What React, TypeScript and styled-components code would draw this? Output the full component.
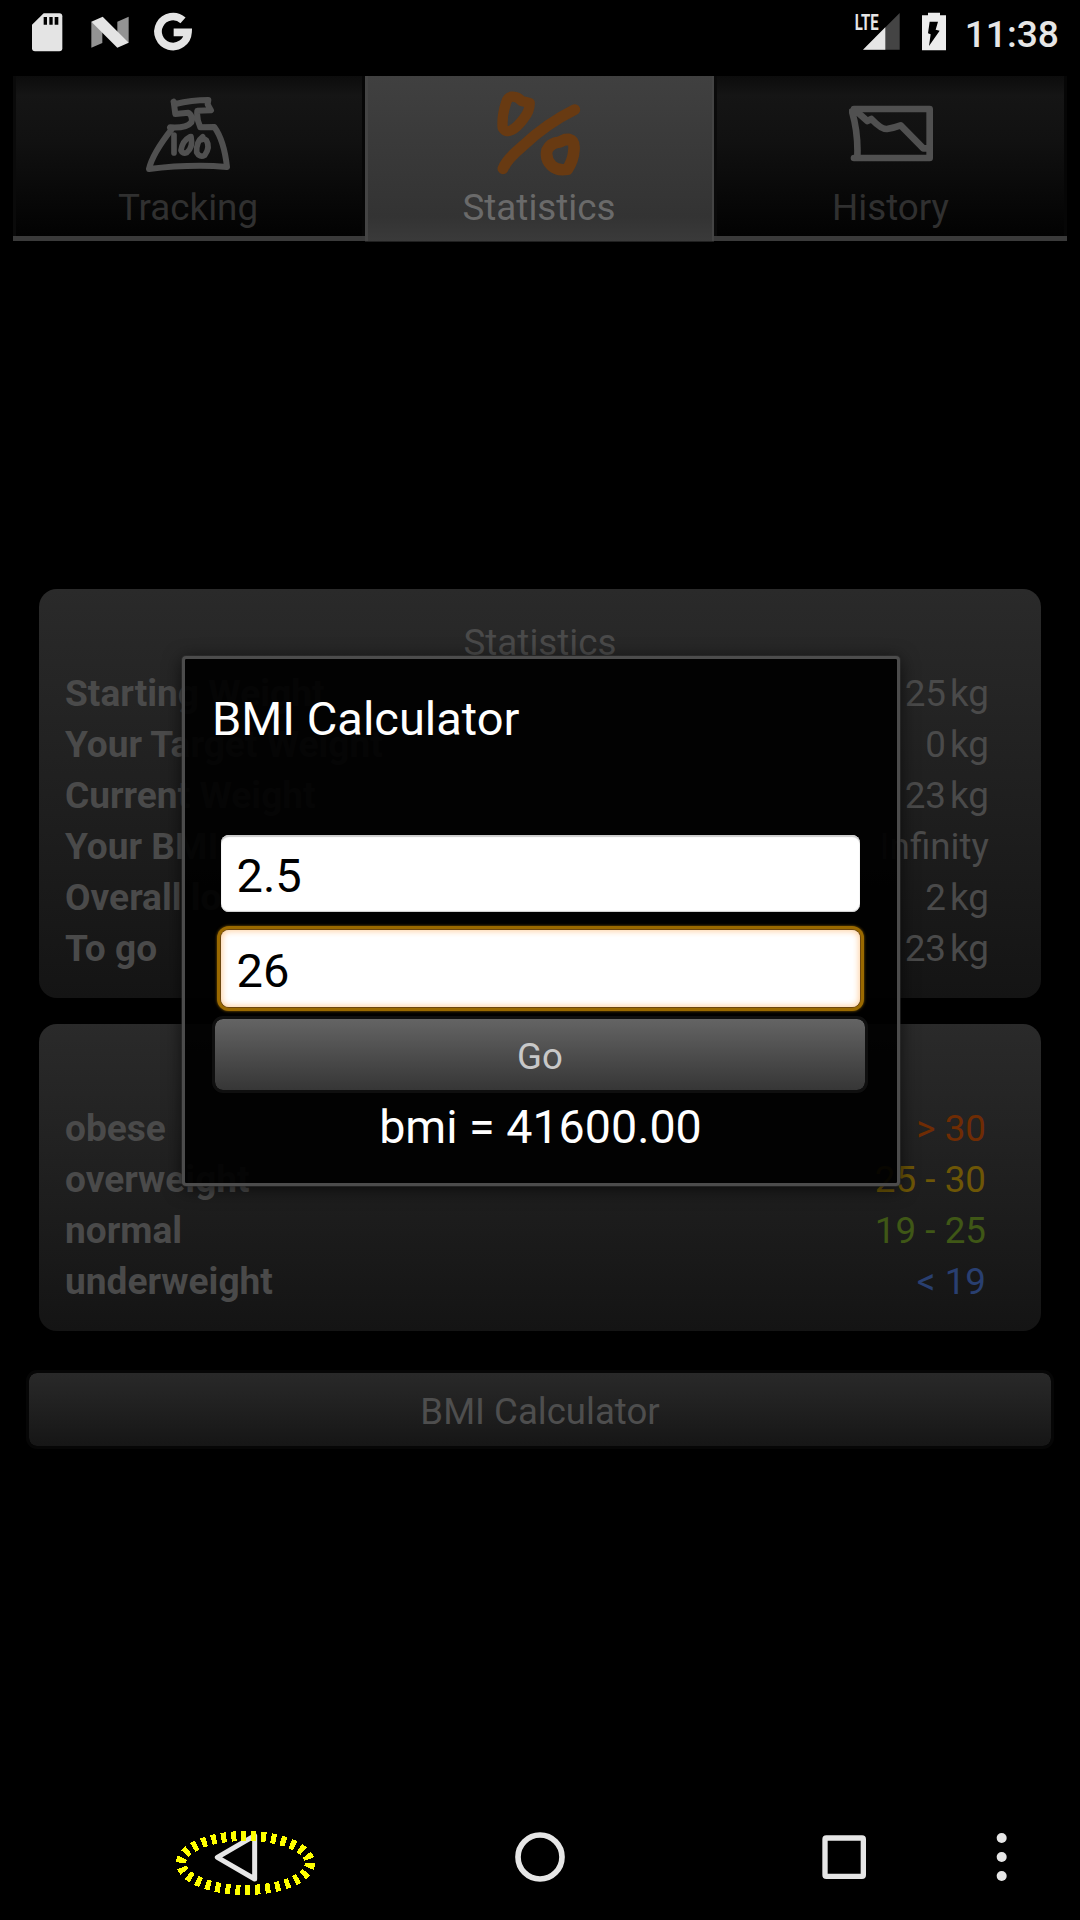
import React from "react";
import styled, { createGlobalStyle } from "styled-components";

const GlobalStyle = createGlobalStyle`
  * { box-sizing: border-box; }
  body { margin: 0; background: #000; }
`;

const Screen = styled.div`
  position: relative;
  width: 1080px;
  height: 1920px;
  display: flex;
  flex-direction: column;
  overflow: hidden;
  background: #000;
  color: #4a4a4a;
  font: 400 36.8px/51px Roboto, sans-serif;
`;

const StatusBar = styled.header`
  height: 76px;
  padding: 12.7px 21px 0 32.4px;
  display: flex;
  align-items: flex-start;
  justify-content: space-between;
`;

const StatusGroup = styled.div<{ $gap: number }>`
  display: flex;
  gap: ${(p) => p.$gap}px;

  svg {
    overflow: visible;
  }
`;

const Clock = styled.span`
  margin-top: 1px;
  margin-left: -2px;
  color: #e6e6e6;
  font-size: 37.2px;
  font-weight: 500;
  line-height: 40px;
`;

const Tabs = styled.nav`
  height: 166px;
  margin: 0 13px;
  display: flex;
`;

const Tab = styled.div<{ $active?: boolean; $width: number; $inset?: number }>`
  width: ${(p) => p.$width}px;
  height: ${(p) => (p.$active ? 166 : 165)}px;
  display: flex;
  flex-direction: column;
  align-items: center;
  padding-right: ${(p) => p.$inset ?? 0}px;
  color: ${(p) => (p.$active ? "#6a6a6a" : "#303030")};
  background: ${(p) =>
    p.$active
      ? "linear-gradient(#404040, #333 85%, #3a3a3a)"
      : "linear-gradient(#0c0c0c, #151515 12%, #111 40%, #020202)"};
  border-bottom: ${(p) => (p.$active ? "1px solid #202020" : "5px solid #3a3a3a")};
  box-shadow: ${(p) => (p.$active ? "inset 3px 0 #444, inset -2px 0 #444" : "inset 3px 0 #0a0a0a, inset -3px 0 #060606")};
`;

const TabIcon = styled.div`
  height: 106px;
  display: flex;
`;

const TabLabel = styled.span`
  line-height: 51px;
`;

const Content = styled.main`
  flex: 1;
  padding: 347px 26px 0;
  display: flex;
  flex-direction: column;
`;

const Card = styled.section<{ $height: number }>`
  height: ${(p) => p.$height}px;
  margin: 0 13px 26px;
  padding: 28px 52px 0 26px;
  border-radius: 18px;
  background: linear-gradient(#2a2a2a, #141414);
`;

const CardTitle = styled.div`
  height: 51px;
  margin-right: -26px;
  text-align: center;
`;

const Row = styled.div`
  height: 51px;
  display: flex;
  justify-content: space-between;
`;

const RowLabel = styled.span`
  font-size: 37.1px;
  font-weight: 700;
`;

const Value = styled.span<{ $color?: string }>`
  display: flex;
  gap: 4px;
  padding-right: ${(p) => (p.$color ? 3 : 0)}px;
  color: ${(p) => p.$color ?? "inherit"};
`;

const Button = styled.button<{ $bright?: boolean }>`
  display: block;
  width: 100%;
  height: ${(p) => (p.$bright ? 77 : 79)}px;
  margin: ${(p) => (p.$bright ? "0" : "13px 0 0")};
  padding: 5px 0 0;
  border: 3px solid ${(p) => (p.$bright ? "#0f0f0f" : "#060606")};
  border-radius: 11px;
  background: ${(p) => (p.$bright ? "linear-gradient(#646464, #363636)" : "linear-gradient(#292929, #161616)")};
  background-clip: padding-box;
  color: ${(p) => (p.$bright ? "#c8c8c8" : "#4e4e4e")};
  font: 400 36.6px/44px Roboto, sans-serif;
`;

const GoRow = styled.div`
  width: 656px;
`;

const NavBar = styled.footer`
  position: relative;
  height: 144px;
  padding-left: 213px;
  display: flex;
  align-items: flex-start;
`;

const NavItem = styled.div<{ $before: number }>`
  margin-left: ${(p) => p.$before}px;
  display: flex;
`;

const TouchMark = styled.svg`
  position: absolute;
  left: 170px;
  top: 47px;
`;

const Dialog = styled.section`
  position: absolute;
  left: 182px;
  top: 656px;
  width: 718px;
  height: 530px;
  display: flex;
  flex-direction: column;
  padding: 30px 27px 0;
  border: 3px solid #4c4c4c;
  border-radius: 4px;
  background: rgba(0, 0, 0, 0.93);
  background-clip: padding-box;
  box-shadow: 0 0 0 1px rgba(50, 50, 50, 0.5), 0 3px 18px rgba(0, 0, 0, 0.65);
  color: #fff;
`;

const DialogTitle = styled.h1`
  height: 146px;
  margin: 0;
  font: 400 47px/60px Roboto, sans-serif;
`;

const Field = styled.input<{ $focused?: boolean }>`
  width: 639px;
  height: 77px;
  margin: 0 0 ${(p) => (p.$focused ? 9 : 18)}px 8.5px;
  padding: 3px 16px 0;
  border: 0;
  outline: 0;
  border-radius: 8px;
  background: #fff;
  color: #000;
  font: 400 47px/74px Roboto, sans-serif;
  box-shadow: ${(p) =>
    p.$focused
      ? "0 0 0 1px #6c4710, 0 0 0 4px #9a6900, 0 0 3px 4px #8a5e00, inset 0 0 6px 1px #ffcf9c"
      : "inset 0 2px 1px #ccc, inset 0 -1px 1px #ccc"};
`;

const Result = styled.output`
  margin-top: 6px;
  padding-right: 1px;
  text-align: center;
  font: 400 46.6px/56px Roboto, sans-serif;
`;

const SdSvg = styled.svg`
  margin-right: 3px;
`;

const TabSvg = styled.svg<{ $top: number }>`
  margin-top: ${(p) => p.$top}px;
  fill: none;
  stroke-linecap: round;
  stroke-linejoin: round;
`;

const SdIcon = () => (
  <SdSvg width="31" height="39" viewBox="97 37 93 117">
    <path d="M132 38H179Q188 38 188 47V143Q188 152 179 152H106Q97 152 97 143V72Z" fill="#e4e4e4" />
    <path d="M132 49h10v23h-10zM149 49h10v23h-10zM165 49h11v23h-11z" fill="#000" />
  </SdSvg>
);

const NougatIcon = () => (
  <svg width="38" height="39" viewBox="275 37 114 117">
    <path d="M276 63V141L309 127V80ZM354 63L388 48V126L354 110Z" fill="#939393" />
    <path d="M276 63L310 48L388 126L354 141Z" fill="#e4e4e4" />
  </svg>
);

const GoogleIcon = () => (
  <svg width="38" height="39" viewBox="462 37 114 117">
    <path d="M549 59A45 45 0 1 0 564 95H521" fill="none" stroke="#e4e4e4" strokeWidth="23" />
  </svg>
);

const SignalIcon = () => (
  <svg width="46" height="39" viewBox="464 38 138 117">
    <path d="M491 148L601 38V148Z" fill="#444" />
    <path d="M491 148L558 81V148Z" fill="#e6e6e6" />
    <text x="466" y="88" fill="#e6e6e6" fontFamily="Roboto, sans-serif" fontWeight="700" fontSize="67" textLength="72" lengthAdjust="spacingAndGlyphs">
      LTE
    </text>
  </svg>
);

const BatteryIcon = () => (
  <svg width="25" height="39" viewBox="663 38 75 117">
    <path d="M666 45H684V37H720V45H738V150H666Z" fill="#ececec" />
    <path d="M689 64H714L707 88L719 91L687 137L692 102L684 99Z" fill="#000" />
  </svg>
);

const ScaleIcon = () => (
  <TabSvg $top={17} width="84" height="82" viewBox="438 278 252 246" stroke="#505050">
    <path
      strokeWidth="18"
      d="M521 304L526 311Q575 299 625 299L623 312L633 330L592 331Q589 356 601 381L643 380Q672 420 681 500Q640 496 600 496Q520 496 447 506Q457 460 517 384L510 381Q560 384 574 366Q580 348 565 337L526 341L521 304"
    />
    <path strokeWidth="17" d="M522 404V458M570 409Q547 421 543 450Q548 462 560 457Q580 442 573 409M608 409Q588 424 590 456Q599 473 614 465Q632 441 619 420Q613 414 605 418" />
  </TabSvg>
);

const PercentIcon = () => (
  <TabSvg $top={15} width="84" height="85" viewBox="440 95 252 255" stroke="#683a12">
    <path strokeWidth="31" d="M484 112Q501 110 514 125L538 131Q539 154 520 178Q500 205 484 212Q466 221 457 205Q454 170 467 131Q471 114 484 112" />
    <path strokeWidth="33" d="M458 328Q469 300 518 259Q590 192 673 151" />
    <path strokeWidth="35" d="M643 241L656 240Q673 244 671 270Q669 304 651 330Q620 335 604 319Q584 299 590 273Q599 251 628 248Z" />
  </TabSvg>
);

const ChartIcon = () => (
  <TabSvg $top={29} width="84" height="58" viewBox="447 316 252 174" stroke="#505050" strokeWidth="20">
    <path d="M462 328H689V475H462" />
    <path d="M456 335Q475 400 472 472M465 331L502 364L514 358Q545 390 561 388Q580 385 602 377L670 446H685" />
  </TabSvg>
);

const stats = [
  ["Starting Weight", "25", "kg"],
  ["Your Target Weight", "0", "kg"],
  ["Current Weight", "23", "kg"],
  ["Your BMI", "Infinity", ""],
  ["Overall loss", "2", "kg"],
  ["To go", "23", "kg"],
];

const ranges = [
  ["obese", "> 30", "#6f2c04"],
  ["overweight", "25 - 30", "#6d5606"],
  ["normal", "19 - 25", "#3f5716"],
  ["underweight", "< 19", "#293f70"],
];

export default function App() {
  return (
    <Screen>
      <GlobalStyle />
      <StatusBar>
        <StatusGroup $gap={25}>
          <SdIcon />
          <NougatIcon />
          <GoogleIcon />
        </StatusGroup>
        <StatusGroup $gap={21}>
          <SignalIcon />
          <BatteryIcon />
          <Clock>11:38</Clock>
        </StatusGroup>
      </StatusBar>

      <Tabs>
        <Tab $width={352} $inset={2}>
          <TabIcon><ScaleIcon /></TabIcon>
          <TabLabel>Tracking</TabLabel>
        </Tab>
        <Tab $active $width={349} $inset={1}>
          <TabIcon><PercentIcon /></TabIcon>
          <TabLabel>Statistics</TabLabel>
        </Tab>
        <Tab $width={353}>
          <TabIcon><ChartIcon /></TabIcon>
          <TabLabel>History</TabLabel>
        </Tab>
      </Tabs>

      <Content>
        <Card $height={409}>
          <CardTitle>Statistics</CardTitle>
          {stats.map(([label, value, unit]) => (
            <Row key={label}>
              <RowLabel>{label}</RowLabel>
              <Value>
                <span>{value}</span>
                {unit && <span>{unit}</span>}
              </Value>
            </Row>
          ))}
        </Card>
        <Card $height={307}>
          <CardTitle />
          {ranges.map(([label, value, color]) => (
            <Row key={label}>
              <RowLabel>{label}</RowLabel>
              <Value $color={color}>{value}</Value>
            </Row>
          ))}
        </Card>
        <Button>BMI Calculator</Button>
      </Content>

      <NavBar>
        <NavItem $before={0}>
          <svg width="46" height="130" viewBox="159 -72 138 390">
            <path d="M172 172L284 107V237Z" fill="none" stroke="#e6e6e6" strokeWidth="15" strokeLinejoin="round" />
          </svg>
        </NavItem>
        <NavItem $before={256}>
          <svg width="50" height="130" viewBox="1065 -72 150 390">
            <circle cx="1140" cy="171" r="66" fill="none" stroke="#e6e6e6" strokeWidth="17" />
          </svg>
        </NavItem>
        <NavItem $before={257}>
          <svg width="44" height="130" viewBox="126 -72 132 390">
            <rect x="135" y="114" width="115" height="115" rx="4" fill="none" stroke="#e6e6e6" strokeWidth="16" />
          </svg>
        </NavItem>
        <NavItem $before={130}>
          <svg width="12" height="130" viewBox="648 -72 36 390">
            <g fill="#e6e6e6">
              <circle cx="665" cy="114" r="15" />
              <circle cx="665" cy="171" r="15" />
              <circle cx="665" cy="228" r="15" />
            </g>
          </svg>
        </NavItem>
        <TouchMark width="152" height="80" viewBox="0 0 152 80">
          <ellipse cx="75.5" cy="40" rx="64.5" ry="27" fill="none" stroke="#ff0" strokeWidth="10" strokeDasharray="5 5" shapeRendering="crispEdges" />
        </TouchMark>
      </NavBar>

      <Dialog>
        <DialogTitle>BMI Calculator</DialogTitle>
        <Field defaultValue="2.5" />
        <Field $focused defaultValue="26" />
        <GoRow>
          <Button $bright>Go</Button>
        </GoRow>
        <Result>bmi = 41600.00</Result>
      </Dialog>
    </Screen>
  );
}
